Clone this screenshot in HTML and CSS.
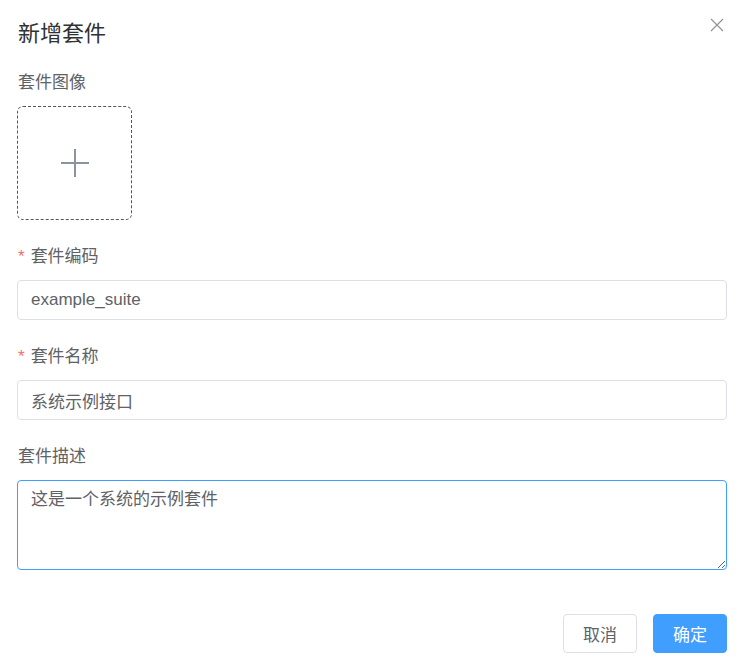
FILE: index.html
```html
<!DOCTYPE html>
<html lang="zh-CN">
<head>
    <meta charset="UTF-8">
    <meta name="viewport" content="width=device-width, initial-scale=1.0">
    <title>新增套件</title>
    <link rel="stylesheet" href="styles.css">
</head>
<body>
    <div class="dialog">
        <div class="dialog-header">
            <span class="dialog-title">新增套件</span>
            <button class="dialog-close" type="button" aria-label="关闭">
                <svg width="14" height="14" viewBox="0 0 14 14"><path d="M1 1L13 13M13 1L1 13" stroke="#909399" stroke-width="1.2" fill="none"/></svg>
            </button>
        </div>
        <form class="dialog-body" id="suiteForm">
            <div class="form-item">
                <label class="form-label">套件图像</label>
                <div class="uploader">
                    <svg width="30" height="30" viewBox="0 0 30 30"><path d="M15 1V29M1 15H29" stroke="#8c939d" stroke-width="2" fill="none"/></svg>
                </div>
            </div>
            <div class="form-item">
                <label class="form-label required" for="code">套件编码</label>
                <input class="form-input" type="text" id="code" value="example_suite">
            </div>
            <div class="form-item">
                <label class="form-label required" for="name">套件名称</label>
                <input class="form-input" type="text" id="name" value="系统示例接口">
            </div>
            <div class="form-item">
                <label class="form-label" for="desc">套件描述</label>
                <textarea class="form-textarea" id="desc">这是一个系统的示例套件</textarea>
            </div>
        </form>
        <div class="dialog-footer">
            <button type="button" class="btn">取消</button>
            <button type="button" class="btn btn-primary">确定</button>
        </div>
    </div>
</body>
</html>
```

FILE: styles.css
```css
* {
    margin: 0;
    padding: 0;
    box-sizing: border-box;
}
body {
    font-family: 'Liberation Sans', 'Noto Sans CJK SC', sans-serif;
    background: #fff;
    color: #606266;
}
.dialog {
    width: 741px;
    padding: 0 14px 0 17px;
}
.dialog-header {
    display: flex;
    justify-content: space-between;
    align-items: flex-start;
    padding-top: 20px;
    height: 48px;
}
.dialog-title {
    font-size: 22px;
    line-height: 28px;
    color: #303133;
    padding-left: 1px;
}
.dialog-close {
    border: none;
    background: none;
    margin-top: -2px;
    margin-right: 3px;
    cursor: pointer;
}
.dialog-body {
    padding-top: 19px;
}
.form-item {
    margin-bottom: 21px;
}
.form-label {
    display: block;
    font-size: 17px;
    line-height: 32px;
    margin-bottom: 7px;
    padding-left: 1px;
    color: #606266;
}
.form-label.required::before {
    content: '*';
    color: #f56c6c;
    margin-right: 6px;
}
.uploader {
    width: 115px;
    height: 114px;
    border: 1px dashed #555;
    border-radius: 6px;
    display: flex;
    justify-content: center;
    align-items: center;
}
.form-input, .form-textarea {
    display: block;
    width: 100%;
    font-family: inherit;
    font-size: 17px;
    color: #606266;
    border: 1px solid #dcdfe6;
    border-radius: 4px;
    padding: 0 13px;
    outline: none;
}
.form-input {
    height: 40px;
    line-height: 38px;
}
.form-textarea {
    height: 90px;
    line-height: 24px;
    padding-top: 7px;
    border-color: #409eff;
    resize: vertical;
}
.dialog-footer {
    display: flex;
    justify-content: flex-end;
    gap: 16px;
    padding-top: 23px;
}
.btn {
    height: 39px;
    padding: 0 19px;
    font-family: inherit;
    font-size: 17px;
    color: #606266;
    background: #fff;
    border: 1px solid #dcdfe6;
    border-radius: 4px;
    cursor: pointer;
}
.btn-primary {
    color: #fff;
    background: #409eff;
    border-color: #409eff;
}
```
